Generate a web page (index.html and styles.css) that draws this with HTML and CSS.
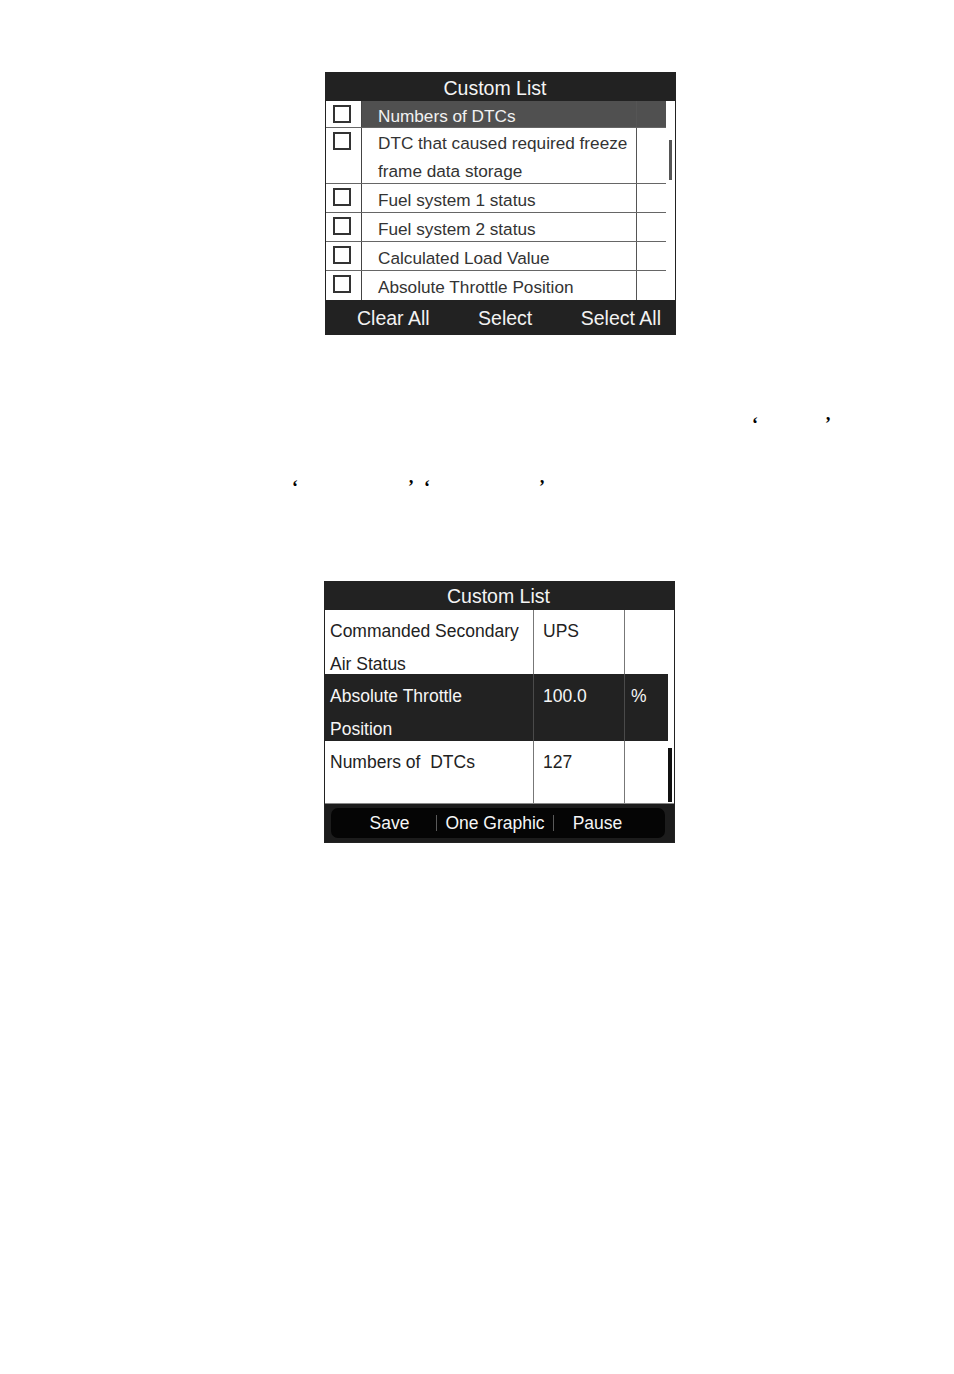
FILE: index.html
```html
<!DOCTYPE html>
<html>
<head>
<meta charset="utf-8">
<link rel="stylesheet" href="styles.css">
</head>
<body>
<div class="page">
  <div class="screen s1">
    <div class="s1-head">Custom List</div>
    <div class="s1-body">
      <div class="s1-rows">
        <div class="row r1 sel"><div class="chk-cell"><span class="chk"></span></div><div class="txt-cell">Numbers of DTCs</div><div class="pad-cell"></div></div>
        <div class="row r2"><div class="chk-cell"><span class="chk"></span></div><div class="txt-cell">DTC that caused required freeze<br>frame data storage</div><div class="pad-cell"></div></div>
        <div class="row r3"><div class="chk-cell"><span class="chk"></span></div><div class="txt-cell">Fuel system 1 status</div><div class="pad-cell"></div></div>
        <div class="row r3"><div class="chk-cell"><span class="chk"></span></div><div class="txt-cell">Fuel system 2 status</div><div class="pad-cell"></div></div>
        <div class="row r3"><div class="chk-cell"><span class="chk"></span></div><div class="txt-cell">Calculated Load Value</div><div class="pad-cell"></div></div>
        <div class="row rlast"><div class="chk-cell"><span class="chk"></span></div><div class="txt-cell">Absolute Throttle Position</div><div class="pad-cell"></div></div>
      </div>
      <div class="s1-track"><div class="s1-thumb"></div></div>
    </div>
    <div class="s1-foot"><span>Clear All</span><span>Select</span><span>Select All</span></div>
  </div>

  <div class="note n1"><span class="q qa">‘</span><span class="q qb">’</span></div>
  <div class="note n2"><span class="q qc">‘</span><span class="q qd">’</span><span class="q qe">‘</span><span class="q qf">’</span></div>

  <div class="screen s2">
    <div class="s2-head">Custom List</div>
    <div class="s2-body">
      <div class="s2-rows">
        <div class="drow d1"><div class="c-name">Commanded Secondary<br>Air Status</div><div class="c-val">UPS</div><div class="c-unit"></div></div>
        <div class="drow d2 sel"><div class="c-name">Absolute Throttle<br>Position</div><div class="c-val">100.0</div><div class="c-unit">%</div></div>
        <div class="drow d3"><div class="c-name">Numbers of&nbsp; DTCs</div><div class="c-val">127</div><div class="c-unit"></div></div>
      </div>
      <div class="s2-track"><div class="s2-thumb"></div></div>
    </div>
    <div class="s2-foot">
      <div class="bar">
        <span class="b b-save">Save</span><span class="sep"></span><span class="b b-one">One Graphic</span><span class="sep"></span><span class="b b-pause">Pause</span>
      </div>
    </div>
  </div>
</div>
</body>
</html>
```

FILE: styles.css
```css
html, body {
  margin: 0;
  padding: 0;
  background: #ffffff;
}
.page {
  width: 954px;
  height: 1374px;
  padding-top: 72px;
  box-sizing: border-box;
  overflow: hidden;
}
.screen {
  font-family: "Liberation Sans", Arial, sans-serif;
  box-sizing: border-box;
  width: 351px;
  border: 1px solid #222;
  display: flex;
  flex-direction: column;
}

/* ---------- screen 1 ---------- */
.s1 {
  margin-left: 325px;
  height: 263px;
}
.s1-head {
  height: 28px;
  background: #222;
  color: #f4f4f4;
  font-size: 19.5px;
  line-height: 31px;
  text-align: center;
  padding-right: 11px;
}
.s1-body {
  display: flex;
  height: 199px;
  background: #fff;
}
.s1-rows {
  width: 340px;
  display: flex;
  flex-direction: column;
}
.row {
  display: flex;
  flex: none;
  border-bottom: 1px solid #666;
  color: #333;
  font-size: 17.2px;
}
.row.r1 { height: 26px; line-height: 26px; }
.row.r2 { height: 55px; line-height: 27.5px; }
.row.r3 { height: 28px; line-height: 28px; }
.row.rlast { flex: 1; border-bottom: none; line-height: 28px; }
.chk-cell {
  width: 36px;
  box-sizing: border-box;
  border-right: 1px solid #444;
  background: #fff;
}
.chk {
  display: block;
  width: 18px;
  height: 18px;
  box-sizing: border-box;
  border: 2px solid #333;
  margin: 4px 0 0 7px;
}
.txt-cell {
  width: 275px;
  box-sizing: border-box;
  border-right: 1px solid #555;
  padding-left: 16px;
  padding-top: 2px;
  white-space: nowrap;
}
.pad-cell {
  flex: 1;
}
.row.sel .txt-cell,
.row.sel .pad-cell {
  background: #505050;
  color: #f2f2f2;
}
.s1-track {
  flex: 1;
}
.s1-thumb {
  width: 3px;
  height: 40px;
  margin: 39px 0 0 3px;
  background: #555;
}
.s1-foot {
  height: 34px;
  background: #222;
  color: #f2f2f2;
  font-size: 19.5px;
  line-height: 36px;
  display: flex;
  justify-content: space-between;
  padding: 0 14px 0 31px;
}

/* ---------- notes ---------- */
.note {
  height: 20px;
  font-family: "Liberation Serif", "Times New Roman", serif;
  font-weight: bold;
  font-size: 18px;
  line-height: 20px;
  white-space: nowrap;
  color: #000;
}
.n1 { margin-top: 79px; }
.n2 { margin-top: 43px; }
.q { display: inline-block; }
.qa { margin-left: 752px; }
.qb { margin-left: 67px; }
.qc { margin-left: 292px; }
.qd { margin-left: 110px; }
.qe { margin-left: 10px; }
.qf { margin-left: 109px; }

/* ---------- screen 2 ---------- */
.s2 {
  margin-top: 84px;
  margin-left: 324px;
  height: 262px;
}
.s2-head {
  height: 28px;
  background: #222;
  color: #f4f4f4;
  font-size: 19.5px;
  line-height: 29px;
  text-align: center;
  padding-right: 2px;
}
.s2-body {
  display: flex;
  height: 193px;
  background: #fff;
}
.s2-rows {
  width: 343px;
  display: flex;
  flex-direction: column;
}
.drow {
  display: flex;
  color: #222;
  font-size: 17.5px;
  line-height: 32.5px;
}
.d1 { height: 64px; }
.d2 { height: 67px; }
.d3 { height: 62px; }
.drow > div {
  box-sizing: border-box;
  padding-top: 5px;
  white-space: nowrap;
}
.d2 > div { padding-top: 6px; }
.c-name {
  width: 209px;
  padding-left: 5px;
  border-right: 1px solid #777;
}
.c-val {
  width: 91px;
  padding-left: 9px;
  border-right: 1px solid #777;
}
.c-unit {
  flex: 1;
  padding-left: 6px;
}
.drow.sel {
  background: #222;
  color: #f6f6f6;
}
.drow.sel .c-name,
.drow.sel .c-val {
  border-right-color: #4a4a4a;
}
.s2-track {
  flex: 1;
}
.s2-thumb {
  width: 4px;
  height: 54px;
  margin-top: 138px;
  background: #111;
}
.s2-foot {
  height: 39px;
  background: #1c1c1c;
  border-top: 1px solid #888;
  box-sizing: border-box;
  padding: 4px 9px 4px 6px;
}
.bar {
  height: 30px;
  background: #050505;
  border-radius: 7px;
  display: flex;
  align-items: center;
  color: #f6f6f6;
  font-size: 17.5px;
  line-height: 30px;
}
.b {
  display: block;
  box-sizing: border-box;
  text-align: center;
  white-space: nowrap;
}
.b-save { width: 105px; padding-left: 12px; }
.b-one { width: 116px; }
.b-pause { flex: 1; padding-right: 24px; }
.sep {
  width: 1px;
  height: 16px;
  background: #5a5a5a;
}
```
